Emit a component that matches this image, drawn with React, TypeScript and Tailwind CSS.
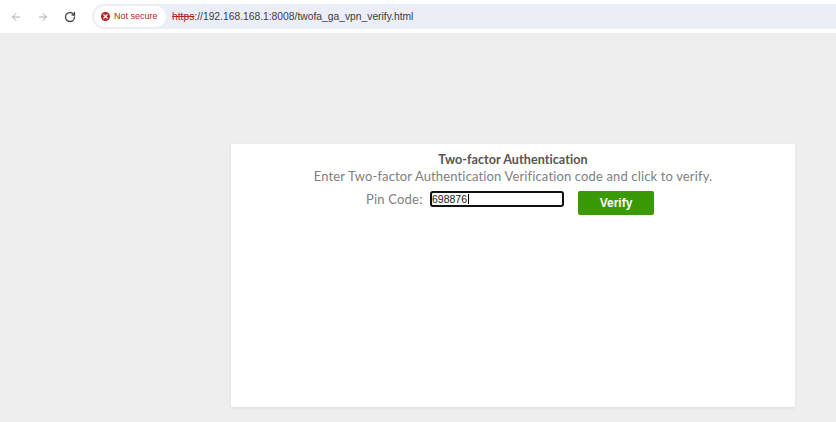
import { ArrowLeft, ArrowRight, RotateCw, X } from "lucide-react";

export default function App() {
  return (
    <div className="h-[422px] w-[836px] overflow-hidden bg-[#eeeeee] font-['Liberation_Sans',sans-serif]">
      {/* browser toolbar */}
      <div className="flex h-[33px] items-center bg-white">
        <div className="flex w-[92px] items-center pl-[10px]">
          <ArrowLeft className="h-[12px] w-[12px] text-[#a9abaf]" strokeWidth={2} />
          <ArrowRight className="ml-[15px] h-[12px] w-[12px] text-[#a9abaf]" strokeWidth={2} />
          <RotateCw className="ml-[15px] h-[12px] w-[12px] text-[#474747]" strokeWidth={2.6} />
        </div>
        <div className="flex h-[25px] flex-1 items-center rounded-l-full bg-[#ebedf7] pl-[2px]">
          <div className="flex h-[21px] w-[72px] items-center rounded-full bg-white pl-[7px]">
            <span className="flex h-[9px] w-[9px] items-center justify-center rounded-full bg-[#b3261e]">
              <X className="h-[7px] w-[7px] text-white" strokeWidth={4} />
            </span>
            <span className="ml-[4px] whitespace-nowrap text-[9px] text-[#b3261e]">Not secure</span>
          </div>
          <div className="ml-[6px] whitespace-nowrap text-[10.3px] text-[#3c4043]">
            <span className="text-[#b3261e] line-through">https</span>://192.168.168.1:8008/twofa_ga_vpn_verify.html
          </div>
        </div>
      </div>

      {/* verify card */}
      <div className="ml-[231px] mt-[111px] h-[263px] w-[564px] bg-white pt-[8px] text-center font-['Lato',sans-serif] shadow-[0_1px_3px_rgba(0,0,0,0.08)]">
        <h1 className="text-[12.6px] font-bold leading-[15px] tracking-[0.05px] text-[#555555]">Two-factor Authentication</h1>
        <p className="mt-[1px] text-[13px] leading-[16px] tracking-[0.14px] text-[#808080]">
          Enter Two-factor Authentication Verification code and click to verify.
        </p>
        <div className="mt-[7px] flex items-start pl-[135px]">
          <label className="w-[57px] whitespace-nowrap text-left text-[13px] leading-[16px] tracking-[0.2px] text-[#808080]">Pin Code:</label>
          <div className="relative ml-[7px]">
            <input
              readOnly
              value="698876"
              className="block h-[16px] w-[134px] rounded-[3px] border-2 border-[#111111] px-0 font-['Liberation_Sans',sans-serif] text-[10.5px] text-[#222222] outline-none"
            />
            {/* text caret */}
            <span className="absolute left-[38px] top-[3px] h-[10px] w-[1px] bg-black" />
          </div>
          <button className="ml-[14px] h-[24px] w-[76px] rounded-[2px] bg-[#3a9a06] font-['Liberation_Sans',sans-serif] text-[12px] font-bold text-white">
            Verify
          </button>
        </div>
      </div>
    </div>
  );
}
